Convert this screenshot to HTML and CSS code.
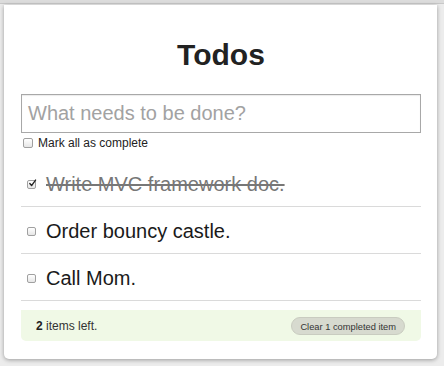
FILE: index.html
```html
<!DOCTYPE html>
<html>
<head>
<meta charset="utf-8">
<link rel="stylesheet" href="styles.css">
</head>
<body>
<div class="topband"></div>
<div class="app">
  <h1 class="title">Todos</h1>
  <div class="newtodo">What needs to be done?</div>
  <div class="markall"><span class="cb cb-lg"></span><span>Mark all as complete</span></div>
  <ul class="list">
    <li class="item done"><span class="cb cb-sm checked"><svg class="tick" viewBox="0 0 10 10" width="9" height="9"><path d="M2 5 L4 7.4 L8.4 1.2" fill="none" stroke="#222" stroke-width="1.5" stroke-linecap="round" stroke-linejoin="round"/></svg></span><span class="text">Write MVC framework doc.</span></li>
    <li class="item"><span class="cb cb-sm"></span><span class="text">Order bouncy castle.</span></li>
    <li class="item"><span class="cb cb-sm"></span><span class="text">Call Mom.</span></li>
  </ul>
  <div class="footer">
    <span class="count"><b>2</b> items left.</span>
    <span class="clear">Clear 1 completed item</span>
  </div>
</div>
</body>
</html>
```

FILE: styles.css
```css
html, body {
  margin: 0;
  padding: 0;
}
body {
  background: #ececec;
  font-family: "Liberation Sans", Arial, sans-serif;
  width: 444px;
  height: 366px;
  overflow: hidden;
  position: relative;
}
.topband {
  height: 3px;
  background: #dcdcdc;
  border-bottom: 1px solid #c8c8c8;
}
.app {
  margin: 1px 0 0 4px;
  width: 433px;
  box-sizing: border-box;
  padding: 32px 16px 16px 17px;
  background: #fff;
  border-radius: 0 0 5px 5px;
  box-shadow: 0 1px 4px rgba(0,0,0,0.35);
  height: 354px;
}
.title {
  margin: 0;
  font-size: 30px;
  line-height: 36px;
  font-weight: bold;
  text-align: center;
  color: #222;
}
.newtodo {
  margin-top: 21px;
  height: 39px;
  box-sizing: border-box;
  border: 1px solid #a8a8a8;
  box-shadow: inset 0 1px 1px rgba(0,0,0,0.08);
  font-size: 20px;
  line-height: 37px;
  padding-left: 6px;
  color: #a2a2a2;
}
.markall {
  display: flex;
  align-items: center;
  gap: 5px;
  margin-top: 3px;
  height: 14px;
  font-size: 12px;
  color: #222;
  padding-left: 2px;
}
.cb {
  display: inline-flex;
  align-items: center;
  justify-content: center;
  box-sizing: border-box;
  border: 1px solid #a0a0a0;
  border-radius: 2px;
  background: linear-gradient(#fff, #e6e6e6);
  flex: none;
}
.cb-lg {
  width: 10px;
  height: 10px;
}
.cb-sm {
  width: 9px;
  height: 9px;
  margin-left: 6px;
}
.tick {
  flex: none;
  margin-top: -2px;
  margin-left: 1px;
}
.list {
  list-style: none;
  margin: 10px 0 0 0;
  padding: 0;
}
.item {
  height: 47px;
  box-sizing: border-box;
  border-bottom: 1px solid #dadada;
  display: flex;
  align-items: center;
  gap: 10px;
  font-size: 20px;
  color: #1a1a1a;
  padding-top: 3px;
}
.item.done .text {
  color: #777;
  text-decoration: line-through;
  text-decoration-color: #777;
}
.footer {
  margin-top: 9px;
  height: 31px;
  background: #f0f9e6;
  border-radius: 0 0 5px 5px;
  display: flex;
  align-items: center;
  justify-content: space-between;
  padding: 0 16px 0 15px;
  font-size: 12px;
  color: #333;
}
.count b {
  color: #222;
}
.clear {
  font-size: 9.3px;
  color: #333;
  height: 18px;
  line-height: 18px;
  padding: 0 8px;
  border-radius: 9px;
  background: #d7dacf;
  border: 1px solid #c9ccc0;
  box-sizing: border-box;
  margin-top: 1px;
}
```
